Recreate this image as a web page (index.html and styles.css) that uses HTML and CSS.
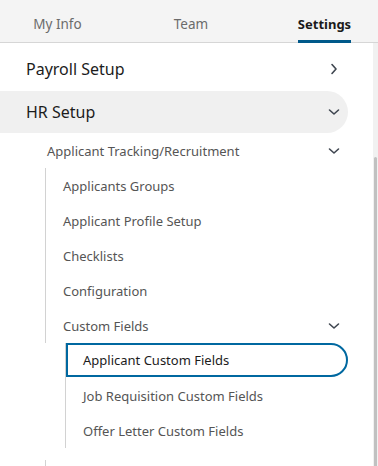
FILE: index.html
```html
<!DOCTYPE html>
<html lang="en">
<head>
  <meta charset="UTF-8">
  <meta name="viewport" content="width=device-width, initial-scale=1.0">
  <title>Settings</title>
  <link rel="stylesheet" href="styles.css">
</head>
<body>
  <div class="tabs">
    <div class="tab"><span>My Info</span></div>
    <div class="tab"><span>Team</span></div>
    <div class="tab active"><span>Settings</span></div>
  </div>
  <div class="page">
    <div class="menu">
      <div class="row top">
        <span>Payroll Setup</span>
        <svg class="chev" width="12" height="12" viewBox="0 0 12 12"><polyline points="4,1.5 8,6 4,10.5" /></svg>
      </div>
      <div class="row top open">
        <span>HR Setup</span>
        <svg class="chev" width="12" height="12" viewBox="0 0 12 12"><polyline points="1.5,4 6,8 10.5,4" /></svg>
      </div>
      <div class="group">
        <div class="row sub">
          <span>Applicant Tracking/Recruitment</span>
          <svg class="chev" width="12" height="12" viewBox="0 0 12 12"><polyline points="1.5,4 6,8 10.5,4" /></svg>
        </div>
        <div class="tree">
          <div class="row item"><span>Applicants Groups</span></div>
          <div class="row item"><span>Applicant Profile Setup</span></div>
          <div class="row item"><span>Checklists</span></div>
          <div class="row item"><span>Configuration</span></div>
          <div class="row item">
            <span>Custom Fields</span>
            <svg class="chev" width="12" height="12" viewBox="0 0 12 12"><polyline points="1.5,4 6,8 10.5,4" /></svg>
          </div>
        </div>
        <div class="leaves">
          <div class="row leaf selected"><span>Applicant Custom Fields</span></div>
          <div class="row leaf"><span>Job Requisition Custom Fields</span></div>
          <div class="row leaf"><span>Offer Letter Custom Fields</span></div>
        </div>
        <div class="tree tail"></div>
      </div>
    </div>
    <div class="scrollbar">
      <div class="thumb"></div>
    </div>
  </div>
</body>
</html>
```

FILE: styles.css
```css
body {
  margin: 0;
  font-family: 'Noto Sans', 'Open Sans', sans-serif;
  background-color: #fff;
  color: #1c1c1c;
  width: 378px;
  height: 466px;
  overflow: hidden;
}
.tabs {
  display: grid;
  grid-template-columns: 115px 152px 1fr;
  height: 43px;
  background-color: #f4f4f4;
  box-shadow: inset 0 -1px #d6d6d6;
}
.tab {
  display: flex;
  justify-content: center;
}
.tab span {
  padding: 14px 0 6px;
  line-height: 20px;
  font-size: 13.5px;
  color: #6b6b6b;
  border-bottom: 3px solid transparent;
}
.tab.active {
  padding-left: 4px;
}
.tab.active span {
  font-size: 13px;
  color: #1a1a1a;
  font-weight: 700;
  border-bottom-color: #00598a;
}
.page {
  display: flex;
  height: 423px;
}
.menu {
  flex: 1;
  padding-top: 4px;
}
.scrollbar {
  width: 5px;
  background-color: #f1f1f1;
  display: flex;
  flex-direction: column;
  justify-content: flex-end;
  align-items: center;
}
.thumb {
  width: 3px;
  height: 309px;
  background-color: #c1c1c1;
  border-radius: 2px 2px 0 0;
}
.row {
  display: flex;
  align-items: center;
  justify-content: space-between;
  width: 348px;
  box-sizing: border-box;
  padding-right: 8px;
}
.chev {
  fill: none;
  stroke: #3f4650;
  stroke-width: 1.6;
  stroke-linecap: round;
  stroke-linejoin: round;
}
.row.top {
  height: 44px;
  padding-left: 26px;
  font-size: 16px;
}
.row.top.open {
  height: 42px;
  background-color: #f0f0f0;
  border-radius: 0 21px 21px 0;
}
.group {
  padding-left: 45px;
}
.row.sub {
  width: 303px;
  height: 35px;
  padding-left: 2px;
  font-size: 13px;
  color: #555;
}
.tree {
  border-left: 1px solid #d2d2d2;
  width: 303px;
}
.row.item {
  width: 302px;
  height: 35px;
  padding-left: 17px;
  font-size: 13px;
  color: #555;
}
.leaves {
  margin-left: 20px;
  border-left: 1px solid #d2d2d2;
}
.row.leaf {
  width: 282px;
  height: 35px;
  padding-left: 17px;
  font-size: 13px;
  color: #555;
  border: 2px solid transparent;
  border-left: none;
}
.row.leaf.selected {
  height: 34px;
  width: 282px;
  padding-left: 15px;
  color: #1c1c1c;
  border: 2px solid #0068a0;
  border-radius: 0 17px 17px 0;
  margin-bottom: 1px;
}
.tree.tail {
  height: 20px;
  margin-top: 12px;
}
```
